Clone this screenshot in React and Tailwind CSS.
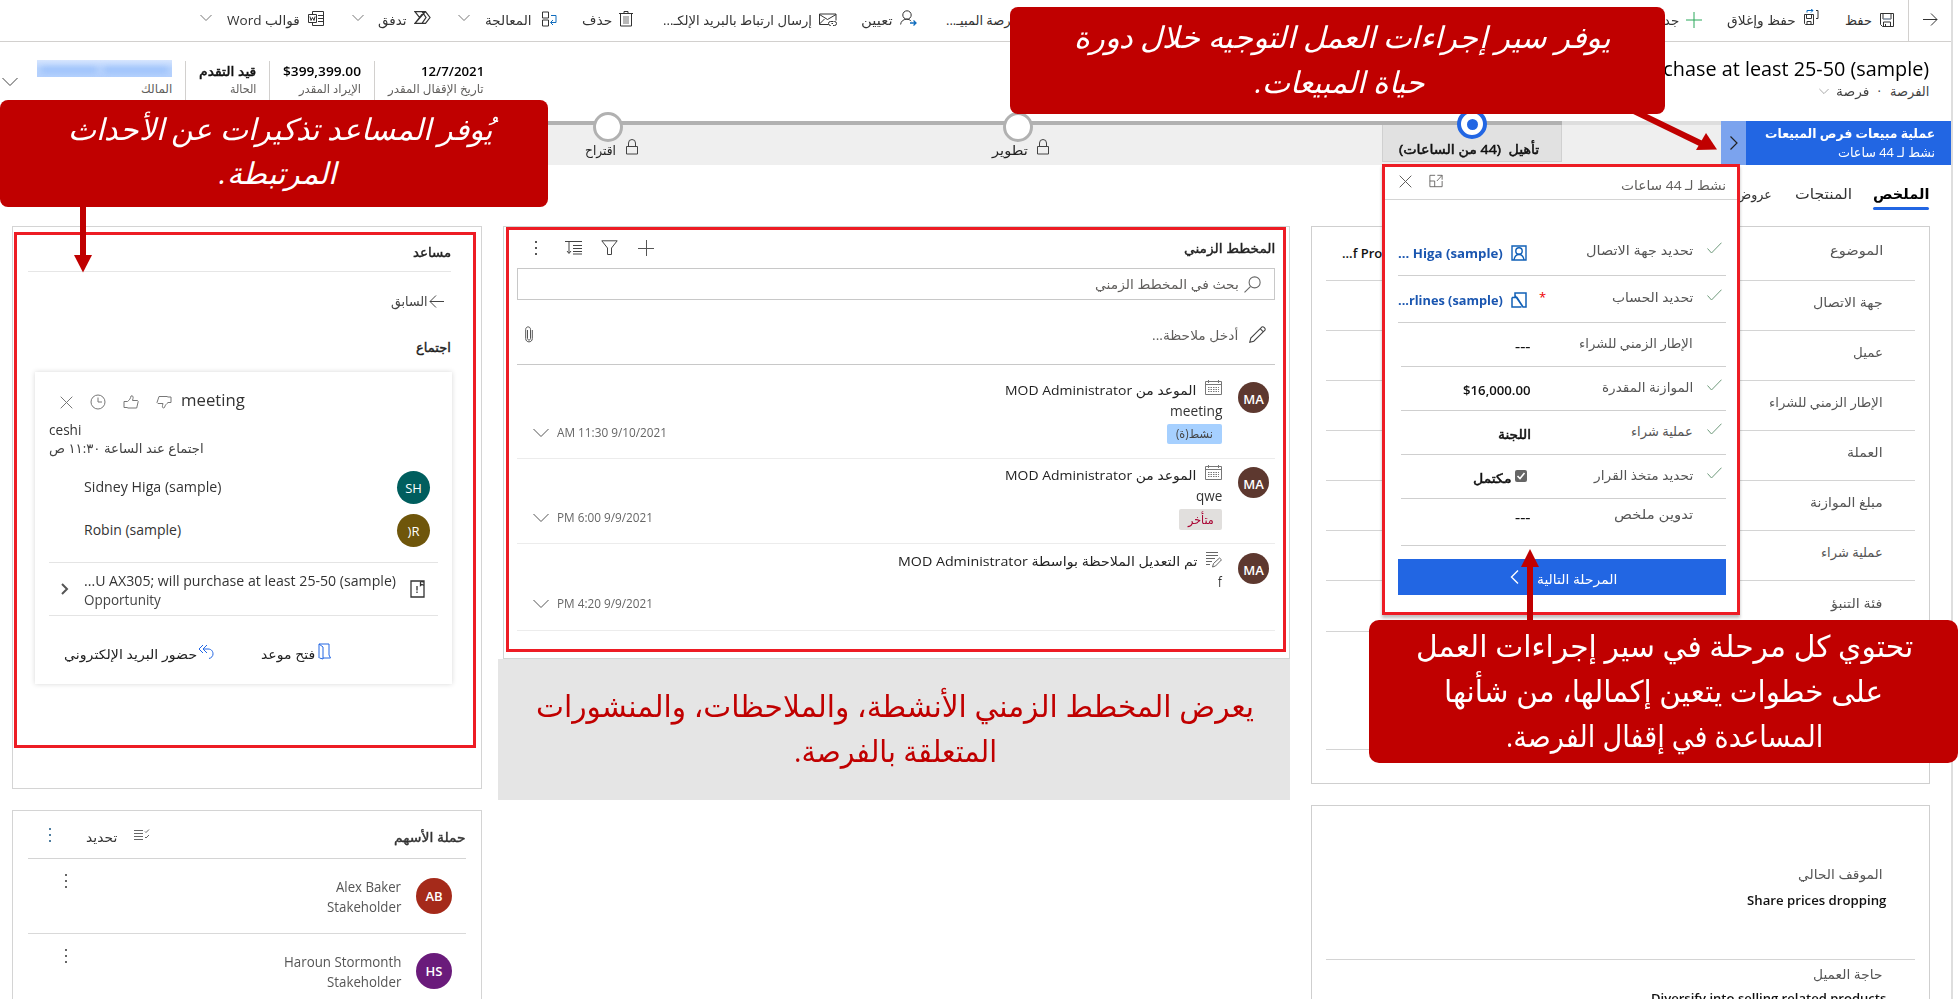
import { useLayoutEffect, useRef, useState } from "react";

/* Text that is condensed or widened to fill the width set by its class. */
function Fit({ className = "", dir = "rtl", children }) {
  const outer = useRef(null);
  const inner = useRef(null);
  const [scale, setScale] = useState(1);
  useLayoutEffect(() => {
    const natural = inner.current.offsetWidth;
    if (natural > 0) setScale(outer.current.clientWidth / natural);
  }, [children]);
  return (
    <span ref={outer} className={"block shrink-0 " + className}>
      <span dir="ltr" className="flex justify-start whitespace-pre">
        <span ref={inner} dir={dir} className="block shrink-0 origin-left" style={{ transform: `scaleX(${scale})` }}>
          {children}
        </span>
      </span>
    </span>
  );
}

function Svg({ className = "", box = "0 0 16 16", sw = 1, children }) {
  return (
    <svg viewBox={box} className={"block shrink-0 " + className} fill="none" stroke="currentColor" strokeWidth={sw}>
      {children}
    </svg>
  );
}

const ChevronDown = ({ className }) => (
  <Svg box="0 0 12 8" className={className}><path d="M.5 1l5.500 5.500L11.500 1" /></Svg>
);
const ChevronBig = ({ className }) => (
  <Svg box="0 0 16 10" className={className}><path d="M.5 1l7.500 7.500L15.500 1" /></Svg>
);
const Close = ({ className }) => (
  <Svg box="0 0 13 13" className={className}><path d="M.7.7l11.600 11.600M12.300.7L.7 12.300" /></Svg>
);
const Check = () => (
  <Svg box="0 0 15 12" className="h-3 w-[15px] text-[#6f9a7c]"><path d="M.5 6.500l4 4.500L14.500.7" /></Svg>
);
const Lock = ({ className = "" }) => (
  <Svg box="0 0 12 16" className={"h-4 w-3 text-[#444] " + className}>
    <path d="M.5 7.500h11v7.500H.5zM2.500 7.500V4a3.500 3.500 0 017 0v3.500" />
  </Svg>
);
const Dots = ({ className = "" }) => (
  <Svg box="0 0 4 16" className={"h-4 w-1 " + className}>
    <path d="M1 1h2v2H1zM1 7h2v2H1zM1 13h2v2H1z" fill="currentColor" stroke="none" />
  </Svg>
);
const Calendar = () => (
  <Svg box="0 0 17 15" className="h-[15px] w-[17px] text-[#777]">
    <path d="M.5 1.500h16v13H.5zM.5 4.500h16M3.500 0v3M13.500 0v3" />
    <path d="M3 7.500h11M3 9.500h11M3 11.500h11" strokeDasharray="1.500 1" />
  </Svg>
);
const NoteIcon = () => (
  <Svg box="0 0 17 17" className="h-[17px] w-[17px] text-[#666]">
    <path d="M1 1.500h12M1 4.500h12M1 7.500h9M1 10.500h6M1 13.500h4" />
    <path d="M7.500 16l1-3.500L14.500 7l2 1.800L10.500 15z" />
  </Svg>
);

const SaveIcon = () => (
  <Svg box="0 0 14 14" className="ms-[14px] h-[14px] w-[14px] text-[#333]">
    <path d="M.5.5h13v13h-11l-2-2zM3 .5v5.500h8V.5M3.500 13.500V9h7v4.500M5.500 11v2.500" />
    <path d="M3.500 6h7" strokeWidth="2" stroke="#9aa6b4" />
  </Svg>
);
const SaveCloseIcon = () => (
  <Svg box="0 0 16 17" className="-mt-1 ms-[26px] h-[17px] w-4 text-[#333]">
    <path d="M1.500 5.500h9v10h-8l-1-1zM3.500 6v3.500h5V6M4 15.500v-3h4v3M13 1.500h2v8h-2" />
    <path d="M4 3.500V1.500h6M8 0l2 1.500L8 3.500" stroke="#0f6cbd" />
  </Svg>
);
const AssignIcon = () => (
  <Svg box="0 0 17 16" className="-mt-1 ms-[29px] h-4 w-[17px] text-[#333]">
    <circle cx="7" cy="5" r="4.200" /><path d="M.6 14.500c.3-3 2.500-5.200 6-5.300 2 0 3.500.6 4.500 2" />
    <path d="M10 13h6M13.500 10.500L16 13l-2.500 2.500" stroke="#0f6cbd" strokeWidth="1.300" />
  </Svg>
);
const MailLinkIcon = () => (
  <Svg box="0 0 18 14" className="ms-[24px] h-[14px] w-[18px] text-[#333]">
    <path d="M9.500 11.500H.5V1h16.500v6.500M.5 1.500l8 5 8.500-5M.5 11l5-5" />
    <path d="M12 12.500h-.5a2 2 0 010-4H14M14 10.500h-1.500M14.500 8.500h1a2 2 0 010 4H14" />
  </Svg>
);
const TrashIcon = () => (
  <Svg box="0 0 14 16" className="-mt-[2px] ms-[30px] h-4 w-[14px] text-[#333]">
    <path d="M0 2.500h14M5 2V.5h4V2M1.500 2.500v12.500h11V2.500" />
    <path d="M5 5v8M7 5v8M9 5v8" stroke="#888" strokeWidth="1.200" />
  </Svg>
);
const ProcessIcon = () => (
  <Svg box="0 0 15 16" className="-mt-[2px] ms-[25px] h-4 w-[15px] text-[#333]">
    <path d="M.5 1h6v6h-6zM.5 9h6v6h-6z" />
    <path d="M9 4.500h5v7H9M11 9l-2.500 2.500L11 14" stroke="#0f6cbd" />
  </Svg>
);
const FlowIcon = () => (
  <Svg box="0 0 17 13" className="-mt-1 ms-[27px] h-[13px] w-[17px] text-[#333]" sw={1.200}>
    <path d="M1 .7h10.500L16 6.500l-4.500 5.800H1l4.500-5.800zM8 .7l4 5.800-4 5.800M5.500 6.500L10 .7M1 12.300L11 1" />
  </Svg>
);
const WordIcon = () => (
  <Svg box="0 0 16 15" className="-mt-[2px] ms-[28px] h-[15px] w-4 text-[#333]">
    <path d="M4.500 3V.5h11v14h-11V12M.5 3.500h8v8h-8zM2 5.500l1 4 1.500-3 1.500 3 1-4M10 4.500h5M10 7.500h5M10 10.500h5" />
  </Svg>
);

function CommandBar() {
  return (
    <div dir="rtl" className="flex h-[42px] w-[1951px] items-center border-b border-[#d2d0ce] pb-[2px] text-[13px] leading-5 text-[#333]">
      <Svg box="0 0 15 13" className="ms-[13px] h-[13px] w-[15px]"><path d="M0 6.500h14M8 .5l6 6-6 6" /></Svg>
      <span className="-mb-[2px] ms-[14px] w-px self-stretch bg-[#d2d0ce]" />
      <SaveIcon />
      <Fit className="ms-2 w-[27px]">حفظ</Fit>
      <SaveCloseIcon />
      <Fit className="ms-[7px] w-[69px]">حفظ وإغلاق</Fit>
      <Svg box="0 0 16 16" className="ms-[25px] h-4 w-4 text-[#2aa85a]"><path d="M0 8h16M8 0v16" /></Svg>
      <Fit className="ms-[7px] w-[26px]">جديد</Fit>
      <Fit className="ms-[635px] w-[72px]">فرصة المبيـ...</Fit>
      <AssignIcon />
      <Fit className="ms-[7px] w-8">تعيين</Fit>
      <MailLinkIcon />
      <Fit className="ms-[7px] w-[149px]">إرسال ارتباط بالبريد الإلكـ...</Fit>
      <TrashIcon />
      <Fit className="ms-[7px] w-[30px]">حذف</Fit>
      <ProcessIcon />
      <Fit className="ms-[10px] w-[47px]">المعالجة</Fit>
      <ChevronDown className="-mt-1 ms-[15px] h-2 w-3 text-[#777]" />
      <FlowIcon />
      <Fit className="ms-[7px] w-[29px]">تدفق</Fit>
      <ChevronDown className="-mt-1 ms-[14px] h-2 w-3 text-[#777]" />
      <WordIcon />
      <Fit className="ms-2 w-[73px]">قوالب Word</Fit>
      <ChevronDown className="-mt-1 ms-[15px] h-2 w-3 text-[#777]" />
    </div>
  );
}

function RecordHeader() {
  return (
    <div dir="rtl" className="flex h-[79px] w-[1951px] justify-between">
      <div className="ms-[22px] mt-[14px]">
        <Fit dir="ltr" className="w-[298px] text-[20px] leading-[26px] font-medium text-black">purchase at least 25-50 (sample)</Fit>
        <div className="-mt-[1px] flex items-center text-[13px] leading-5 text-[#444]">
          <Fit className="w-[39px]">الفرصة</Fit>
          <span className="ms-[9px]">·</span>
          <Fit className="ms-[9px] w-[33px]">فرصة</Fit>
          <ChevronDown className="ms-[7px] h-[7px] w-[10px] text-[#999]" />
        </div>
      </div>
      <div className="flex pt-[19px] text-[12px] leading-[17px] text-[#605e5c]">
        <div className="flex w-[109px] flex-col">
          <Fit dir="ltr" className="w-[63px] text-[13px] font-semibold leading-5 text-black">12/7/2021</Fit>
          <Fit className="-mt-[1px] w-[96px]">تاريخ الإقفال المقدر</Fit>
        </div>
        <div className="flex h-[40px] w-[105px] flex-col border-r border-[#d2d0ce] pr-[13px]">
          <Fit dir="ltr" className="w-[78px] text-[13px] font-semibold leading-5 text-black">$399,399.00</Fit>
          <Fit className="-mt-[1px] w-[62px]">الإيراد المقدر</Fit>
        </div>
        <div className="flex h-[40px] w-[84px] flex-col border-r border-[#d2d0ce] pr-[13px]">
          <Fit className="w-[57px] text-[13px] leading-5 text-[#111] [-webkit-text-stroke:0.5px]">قيد التقدم</Fit>
          <Fit className="-mt-[1px] w-[26px]">الحالة</Fit>
        </div>
        <div className="flex h-[40px] w-[165px] flex-col border-r border-[#d2d0ce] pr-[13px]">
          <span className="relative -mt-[1px] mb-[3px] h-[17px] w-[135px] overflow-hidden bg-linear-to-t from-[#b5d1fd] via-[#b9d4fd] to-[#d6e5fe]">
            <span className="absolute top-2 left-1 h-1 w-14 bg-[#8db8fa] blur-[3px]" />
            <span className="absolute top-2 right-1 h-1 w-16 bg-[#8db8fa] blur-[3px]" />
          </span>
          <Fit className="w-[31px]">المالك</Fit>
        </div>
        <div className="flex w-[21px] justify-end pt-4 pl-[2px]">
          <ChevronBig className="h-[10px] w-4 text-[#444]" />
        </div>
      </div>
    </div>
  );
}

function ProcessBar() {
  return (
    <div className="relative flex h-[44px] w-[1951px] text-[13px] leading-5 text-[#222]">
      <div className="flex h-full w-[1382px] items-center border-t-4 border-[#b1b1b1] bg-[#efefef] pt-[9px] pl-[585px]">
        <Fit className="w-[31px]">اقتراح</Fit>
        <Lock className="-mt-[5px] ml-[10px]" />
        <Fit className="ml-[354px] w-9">تطوير</Fit>
        <Lock className="-mt-[5px] ml-[9px]" />
      </div>
      <div className="h-full w-[180px] border-t-4 border-[#b1b1b1] bg-[#efefef]">
        <div className="flex h-[37px] items-end border border-t-0 border-[#d0d0d0] bg-[#e1e1e1] pb-[2px] pl-4">
          <Fit className="w-[140px] text-[#111] [-webkit-text-stroke:0.5px]">تأهيل  (44 من الساعات)</Fit>
        </div>
      </div>
      <div className="h-full w-[159px] border-t-4 border-[#dedede] bg-[#efefef]" />
      <div className="flex h-full w-[25px] items-center justify-center bg-[#7ba3ee] text-[#222]">
        <Svg box="0 0 8 14" className="h-[14px] w-2" sw={1.200}><path d="M.5.5l6.500 6.500-6.500 6.500" /></Svg>
      </div>
      <div dir="rtl" className="h-full w-[205px] bg-[#2266e3] pt-[3px] pr-4 text-white">
        <Fit className="w-[170px] leading-[19px] font-bold">عملية مبيعات فرص المبيعات</Fit>
        <Fit className="w-[97px] leading-[19px]">نشط لـ 44 ساعات</Fit>
      </div>
      <span className="absolute -top-[9px] left-[593px] size-[30px] rounded-full border-[3px] border-[#b1b1b1] bg-white" />
      <span className="absolute -top-[9px] left-[1003px] size-[30px] rounded-full border-[3px] border-[#b1b1b1] bg-white" />
      <span className="absolute -top-[12px] left-[1457px] flex size-[30px] items-center justify-center rounded-full border-4 border-[#2266e3] bg-white">
        <span className="size-[11px] rounded-full bg-[#2266e3]" />
      </span>
    </div>
  );
}

function Tabs() {
  return (
    <div dir="rtl" className="flex h-[61px] w-[1951px] pt-[19px] pr-[22px] text-[14px] leading-5 text-[#333]">
      <div>
        <Fit className="w-[56px] font-bold text-black">الملخص</Fit>
        <div className="mt-[3px] h-[3px] w-[56px] rounded-full bg-[#2266e3]" />
      </div>
      <Fit className="ms-[21px] w-[57px]">المنتجات</Fit>
      <Fit className="ms-[23px] w-[36px]">عروض</Fit>
    </div>
  );
}

function AssistantCard() {
  return (
    <div className="h-[563px] w-[470px] border border-[#d4d4d4] bg-white text-[13px] leading-5 text-[#444]">
      <div dir="rtl" className="mr-[30px] ml-[15px] h-[45px] border-b border-[#e6e6e6] pt-[15px]">
        <Fit className="w-[38px] text-[#222] [-webkit-text-stroke:0.4px]">مساعد</Fit>
      </div>
      <div dir="rtl" className="mt-[19px] mr-[37px] flex items-center">
        <Svg box="0 0 15 13" className="h-[13px] w-[15px]"><path d="M1 6.500h14M7 .5l-6 6 6 6" /></Svg>
        <Fit className="ms-[1px] w-[37px]">السابق</Fit>
      </div>
      <div dir="rtl" className="mt-[26px] mr-[30px]">
        <Fit className="w-[35px] text-[#222] [-webkit-text-stroke:0.4px]">اجتماع</Fit>
      </div>
      <div className="mt-[15px] ml-[22px] h-[312px] w-[417px] bg-white pt-5 shadow-[0_0_5px_rgba(0,0,0,0.16)]">
        <div className="flex h-5 items-center pl-[25px] text-[#777]">
          <Close className="h-[13px] w-[13px]" />
          <Svg className="ml-[17px] size-4"><circle cx="8" cy="8" r="7" /><path d="M8 3.500V8h4" /></Svg>
          <Svg className="ml-[17px] size-4">
            <path d="M1 7.500h3.500C6.500 6 7.500 4.500 8 2c1.500-.8 2.500.5 2 2.500L9.500 6.500h5l.7 1-1.500 6.500H5l-1-.5H1z" />
          </Svg>
          <Svg className="ml-[17px] size-4">
            <path d="M15 3v5.500h-3C10.500 10 9 11 8.500 13.500 7 14.500 6 13.500 6.500 11.500L7 9.500H2l-1-1L3 2.500h8l1 .5z" />
          </Svg>
          <Fit dir="ltr" className="-mt-1 ml-[9px] w-16 text-[17px] text-[#333]">meeting</Fit>
        </div>
        <div className="mt-[8px] pl-[14px] leading-[19px]">
          <Fit dir="ltr" className="w-8 text-[14px] text-[#333]">ceshi</Fit>
          <Fit className="w-[155px]">اجتماع عند الساعة ١١:٣٠ ص</Fit>
        </div>
        <div className="mt-[13px] flex h-[33px] items-center justify-between pr-[22px] pl-[49px]">
          <Fit dir="ltr" className="-mt-[1px] w-[137px] text-[14px] text-[#333]">Sidney Higa (sample)</Fit>
          <span className="flex size-[33px] items-center justify-center rounded-full bg-[#005e5e] text-white">SH</span>
        </div>
        <div className="mt-[10px] flex h-[33px] items-center justify-between pr-[22px] pl-[49px]">
          <Fit dir="ltr" className="-mt-[1px] w-[97px] text-[14px] text-[#333]">Robin (sample)</Fit>
          <span className="flex size-[33px] items-center justify-center rounded-full bg-[#6f560b] text-white">)R</span>
        </div>
        <div className="mx-[14px] mt-[15px] flex h-[54px] items-center border-y border-[#e4e4e4] pl-3">
          <Svg box="0 0 8 12" className="h-3 w-2 text-[#555]" sw={2}><path d="M1 1l5 5-5 5" /></Svg>
          <div className="mt-[2px] ml-[15px] w-[312px] text-[14px] leading-[19px]">
            <Fit dir="ltr" className="w-[312px] text-[#333]">...U AX305; will purchase at least 25-50 (sample)</Fit>
            <Fit dir="ltr" className="w-[77px]">Opportunity</Fit>
          </div>
          <Svg box="0 0 15 18" className="ml-[14px] h-[18px] w-[15px] text-[#333]" sw={1.300}>
            <path d="M1 1h9l4 1v15H1zM10.500 1v4.500l1.500-1 2 1V1z" /><path d="M7 6v4.500M7 11.500V13" />
          </Svg>
        </div>
        <div className="mt-[28px] flex items-center pl-[29px] text-[#222]">
          <Fit className="w-[133px]">حضور البريد الإلكتروني</Fit>
          <Svg className="-mt-[5px] ml-[1px] size-4 text-[#2266e3]"><path d="M5 1L1 5l4 4M9 1L5 5l4 4M5 5h5c4 0 5 3 5 5s-1.500 4-4 4.500" /></Svg>
          <Fit className="ml-[47px] w-[54px]">فتح موعد</Fit>
          <Svg box="0 0 13 17" className="-mt-[5px] ml-[3px] h-[17px] w-[13px] text-[#2266e3]">
            <path d="M1 15V1h10v11l1.500 3H5M1 1l4 3v12l-3.500-1" />
          </Svg>
        </div>
      </div>
    </div>
  );
}

function Stakeholder({ initials, name, color, nameWidth }) {
  return (
    <div dir="rtl" className="mr-[15px] ml-[15px] flex h-[75px] items-start border-b border-[#d9d9d9] text-[14px] text-[#555]">
      <span className={"ms-[14px] mt-[19px] flex size-9 items-center justify-center rounded-full text-white " + color}>
        <span className="text-[13px] font-semibold">{initials}</span>
      </span>
      <div className="ms-[15px] mt-[18px]">
        <Fit dir="ltr" className={nameWidth}>{name}</Fit>
        <Fit dir="ltr" className="w-[74px]">Stakeholder</Fit>
      </div>
      <Dots className="ms-auto mt-[14px] ml-[36px] text-[#666]" />
    </div>
  );
}

function StakeholdersCard() {
  return (
    <div className="mt-[21px] h-[200px] w-[470px] border border-[#d4d4d4] bg-white text-[13px] leading-5 text-[#333]">
      <div dir="rtl" className="mx-[15px] flex h-[48px] items-center border-b border-[#d4d4d4] pt-1">
        <Fit className="w-[72px] [-webkit-text-stroke:0.4px]">حملة الأسهم</Fit>
        <Svg box="0 0 16 12" className="-mt-1 ms-[244px] h-3 w-4 text-[#666]">
          <path d="M0 1.500h9M0 4.500h9M0 7.500h9M0 10.500h9M11 2.500l1 1 3-3M11 8l1 1 3-3" />
        </Svg>
        <Fit className="ms-[17px] w-[31px]">تحديد</Fit>
        <Dots className="-mt-1 ms-[34px] text-[#4f7ea0]" />
      </div>
      <Stakeholder initials="AB" name="Alex Baker" color="bg-[#a52a1a]" nameWidth="w-[65px]" />
      <Stakeholder initials="HS" name="Haroun Stormonth" color="bg-[#6a1b7b]" nameWidth="w-[117px]" />
    </div>
  );
}

function TimelineItem({ className, icon, title, titleWidth, sub, subWidth, tag, date, dateWidth }) {
  return (
    <div dir="rtl" className={"flex items-start border-b border-[#ececec] " + className}>
      <span className="ms-[6px] flex size-[31px] items-center justify-center rounded-full bg-[#5d382f] pt-[2px] text-[13px] font-semibold text-white">MA</span>
      <div className="ms-[16px] -mt-[2px]">
        <div className="flex h-[19px]">
          {icon}
          <Fit className={"ms-2 font-medium text-[#222] " + titleWidth}>{title}</Fit>
        </div>
        <Fit dir="ltr" className={"mt-[2px] text-[14px] text-[#333] " + subWidth}>{sub}</Fit>
        {tag}
      </div>
      <div dir="ltr" className="mt-[41px] mr-auto flex w-[160px] items-center pl-4">
        <ChevronBig className="h-[10px] w-4 text-[#555]" />
        <Fit dir="ltr" className={"ml-2 text-[12px] text-[#666] " + dateWidth}>{date}</Fit>
      </div>
    </div>
  );
}

function TimelineCard() {
  return (
    <div className="relative ml-[5px] h-[433px] w-[787px] border border-[#d0d6d4] bg-white pr-[13px] pl-[13px] text-[13px] leading-5 text-[#444]">
      <div className="flex h-[41px] items-center">
        <Dots className="ml-[17px] text-[#555]" />
        <Svg box="0 0 17 15" className="ml-[27px] h-[15px] w-[17px] text-[#444]">
          <path d="M0 1.500h17M4 2v11M2 11l2 2.500L6 11M8 5.500h9M8 8.500h9M8 11.500h9M8 14h9" />
        </Svg>
        <Svg box="0 0 17 15" className="ml-[19px] h-[15px] w-[17px] text-[#444]"><path d="M.8.8h15.400L10.500 8v6.500h-4V8z" /></Svg>
        <Svg className="ml-[20px] size-4 text-[#555]"><path d="M0 8.500h16M8.500 0v16" /></Svg>
        <Fit className="ml-[530px] w-[91px] text-[#222] [-webkit-text-stroke:0.4px]">المخطط الزمني</Fit>
      </div>
      <div dir="rtl" className="flex h-8 w-[758px] items-center border border-[#c8c8c8] text-[#605e5c]">
        <Svg className="ms-[13px] size-[17px] text-[#666]"><circle cx="10" cy="6" r="5.200" /><path d="M6 10l-5.500 5.500" /></Svg>
        <Fit className="ms-[5px] w-[144px]">بحث في المخطط الزمني</Fit>
      </div>
      <div dir="rtl" className="flex h-[65px] w-[758px] items-center border-b border-[#c8c8c8] pt-[5px] text-[#605e5c]">
        <Svg className="ms-[9px] size-[17px] text-[#444]"><path d="M.7 15.300l1-4L12 1c1.500-1 4 1.500 3 3L4.500 14.300zM10.500 2.500l3 3" /></Svg>
        <Fit className="ms-[11px] w-[86px]">أدخل ملاحظة...</Fit>
        <Svg box="0 0 8 17" className="ms-auto ml-2 h-[17px] w-2 text-[#555]">
          <path d="M2.500 4v8.500c0 2 3 2 3 0V3.500C5.500 0 .7 0 .7 3.500v9C.7 17 7.300 17 7.300 12.500V4" />
        </Svg>
      </div>
      <div className="w-[758px]">
        <TimelineItem
          className="h-[94px] pt-[17px]" icon={<Calendar />} title="الموعد من MOD Administrator" titleWidth="w-[192px]"
          sub="meeting" subWidth="w-[52px]" date="AM 11:30 9/10/2021" dateWidth="w-[110px]"
          tag={<span className="mt-[3px] flex h-[20px] w-[55px] items-center justify-center rounded-[2px] bg-[#a6d0ff] text-[12px]"><Fit className="w-[37px]">نشط(ة)</Fit></span>}
        />
        <TimelineItem
          className="h-[85px] pt-[8px]" icon={<Calendar />} title="الموعد من MOD Administrator" titleWidth="w-[192px]"
          sub="qwe" subWidth="w-[26px]" date="PM 6:00 9/9/2021" dateWidth="w-24"
          tag={<span className="mt-[3px] flex h-[21px] w-[43px] items-center justify-center rounded-[2px] bg-[#e1dfdd] text-[12px] text-[#a80030]"><Fit className="w-[26px]">متأخر</Fit></span>}
        />
        <TimelineItem
          className="h-[87px] pt-[9px]" icon={<NoteIcon />} title="تم التعديل الملاحظة بواسطة MOD Administrator" titleWidth="w-[299px]"
          sub="f" subWidth="w-[4px]" date="PM 4:20 9/9/2021" dateWidth="w-24"
        />
      </div>
      <div className="pointer-events-none absolute top-0 left-[2px] h-[425px] w-[780px] border-[3px] border-[#ed1c24]" />
    </div>
  );
}

const detailRows = [
  ["الموضوع", "w-[53px]", "h-[54px]"],
  ["جهة الاتصال", "w-[70px]", "h-[50px]"],
  ["عميل", "w-[30px]", "h-[50px]"],
  ["الإطار الزمني للشراء", "w-[114px]", "h-[50px]"],
  ["العملة", "w-[36px]", "h-[50px]"],
  ["مبلغ الموازنة", "w-[73px]", "h-[50px]"],
  ["عملية شراء", "w-[62px]", "h-[50px]"],
  ["فئة التنبؤ", "w-[52px]", "h-[51px]"],
];

function DetailsColumn() {
  return (
    <div className="ml-[21px] w-[619px] text-[13px] leading-5 text-[#555]">
      <div className="h-[558px] border border-[#cfcfcf] bg-white px-[14px]">
        {detailRows.map(([label, width, height], i) => (
          <div key={label} dir="rtl" className={"flex items-center justify-between border-b border-[#d4d4d4] pr-8 pb-[7px] " + height}>
            <Fit className={width}>{label}</Fit>
            {i === 0 && <Fit dir="ltr" className="mt-[6px] ml-4 w-[40px] font-semibold text-[#111]">...f Pro</Fit>}
          </div>
        ))}
        <div className="h-[118px] border-b border-[#d4d4d4]" />
      </div>
      <div dir="rtl" className="mt-[21px] h-[220px] border border-[#cfcfcf] bg-white px-[14px]">
        <div className="h-[154px] border-b border-[#d4d4d4] pt-[58px] pr-8">
          <Fit className="w-[85px]">الموقف الحالي</Fit>
          <Fit dir="ltr" className="-mr-[3px] mt-[6px] w-[139px] font-semibold text-[#111]">Share prices dropping</Fit>
        </div>
        <div className="pt-[4px] pr-8">
          <Fit className="w-[70px]">حاجة العميل</Fit>
          <Fit dir="ltr" className="-mr-[3px] mt-[4px] w-[235px] font-semibold text-[#111]">Diversify into selling related products</Fit>
        </div>
      </div>
    </div>
  );
}

const ContactIcon = () => (
  <Svg className="ms-1 size-4 text-[#1160b7]" sw={1.400}>
    <path d="M1 1h14v14H1z" /><circle cx="8" cy="6" r="3.200" /><path d="M3 15c.5-3.500 2-5.500 5-5.500s4.500 2 5 5.500" />
  </Svg>
);
const AccountIcon = () => (
  <Svg className="ms-1 size-4 text-[#1160b7]" sw={1.500}>
    <path d="M1 5.500V15h9.500M4 3.500V1h11v14h-3zM1 5.500h5l6 9.500M4 1v4.500" />
  </Svg>
);

function Step({ className, line = "w-[325px]", done, label, labelWidth, required, children }) {
  return (
    <div className={"flex items-center border-[#cfcfcf] " + className}>
      <div className={"flex h-full items-center border-b border-inherit " + line}>
        <span className="ms-1 w-[15px] shrink-0 pb-2">{done && <Check />}</span>
        <div className="ms-[14px] flex w-[162px] shrink-0 pb-[4px] text-[#555]">
          <Fit className={labelWidth}>{label}</Fit>
          {required && <span className="ms-auto ml-[8px] text-[#e00]">*</span>}
        </div>
        <div className="flex items-center pt-[2px] font-semibold text-[#111]">{children}</div>
      </div>
    </div>
  );
}

function StageFlyout() {
  return (
    <div dir="rtl" className="absolute top-[164px] left-[1382px] h-[451px] w-[358px] border-[3px] border-[#ed1c24] bg-white text-[13px] leading-5 shadow-[0_3px_3px_rgba(0,0,0,0.25)]">
      <div className="flex h-[33px] items-center border-b border-[#d4d4d4] pr-[11px] pl-[14px] text-[#605e5c]">
        <Fit className="mt-1 w-[105px]">نشط لـ 44 ساعات</Fit>
        <Svg className="-mt-1 ms-auto h-[14px] w-4">
          <path d="M7 1.500H1v13h14V8M9.500 1.500h5.500v5M15 1.500L9 8M1 8h5.500v6.500" />
        </Svg>
        <Close className="-mt-1 ms-[16px] h-[13px] w-[13px]" />
      </div>
      <div className="pr-[11px]">
        <Step className="h-[76px]" line="w-[328px] pt-[28px]" done label="تحديد جهة الاتصال" labelWidth="w-[107px]">
          <ContactIcon />
          <Fit dir="ltr" className="ms-2 w-[105px] font-bold text-[#1a56b0]">... Higa (sample)</Fit>
        </Step>
        <Step className="h-[47px]" line="w-[328px]" done required label="تحديد الحساب" labelWidth="w-[81px]">
          <AccountIcon />
          <Fit dir="ltr" className="ms-2 w-[105px] font-bold text-[#1a56b0]">...rlines (sample)</Fit>
        </Step>
        <Step className="h-[44px]" label="الإطار الزمني للشراء" labelWidth="w-[114px]">
          <Fit dir="ltr" className="w-4">---</Fit>
        </Step>
        <Step className="h-[44px]" done label="الموازنة المقدرة" labelWidth="w-[91px]">
          <Fit dir="ltr" className="w-[68px]">$16,000.00</Fit>
        </Step>
        <Step className="h-[44px]" done label="عملية شراء" labelWidth="w-[62px]">
          <Fit className="w-[33px] font-normal [-webkit-text-stroke:0.5px]">اللجنة</Fit>
        </Step>
        <Step className="h-[44px]" done label="تحديد متخذ القرار" labelWidth="w-[99px]">
          <span className="-mt-1 ms-[4px] flex size-[12px] items-center justify-center rounded-[2px] bg-[#666] text-white">
            <Svg box="0 0 10 10" className="size-[10px]" sw={1.600}><path d="M1.500 5l2.500 2.500L8.500 2" /></Svg>
          </span>
          <Fit className="ms-1 w-[38px] font-normal [-webkit-text-stroke:0.5px]">مكتمل</Fit>
        </Step>
        <Step className="h-[47px]" line="w-[325px] pb-3" label="تدوين ملخص" labelWidth="w-[79px]">
          <Fit dir="ltr" className="w-4">---</Fit>
        </Step>
        <div className="mt-[13px] flex h-[36px] w-[328px] items-center bg-[#2266e3] pr-[109px] text-white">
          <Fit className="mt-1 w-[80px]">المرحلة التالية</Fit>
          <Svg box="0 0 9 14" className="ms-[18px] h-[14px] w-[9px]" sw={1.400}><path d="M8 .5L1.500 7 8 13.500" /></Svg>
        </div>
      </div>
    </div>
  );
}

function Callouts() {
  return (
    <>
      <Svg box="0 0 90 44" className="absolute top-[110px] left-[1632px] h-11 w-[90px] text-[#c00000]">
        <path d="M2 1L70 34" strokeWidth="6" /><path d="M74 23L85 39.500L64 40z" fill="currentColor" stroke="none" />
      </Svg>
      <Svg box="0 0 18 70" className="absolute top-[203px] left-[74px] h-[70px] w-[18px] text-[#c00000]">
        <path d="M9 0V56" strokeWidth="6" /><path d="M0 52h18L9 69.500z" fill="currentColor" stroke="none" />
      </Svg>
      <Svg box="0 0 18 75" className="absolute top-[549px] left-[1521px] h-[75px] w-[18px] text-[#c00000]">
        <path d="M9 14V75" strokeWidth="6" /><path d="M0 18h18L9 0z" fill="currentColor" stroke="none" />
      </Svg>
      <div className="absolute top-[7px] left-[1010px] h-[107px] w-[655px] rounded-[8px] bg-[#c00000] pt-[7px] text-[30px] leading-[45px] text-white italic">
        <Fit className="ml-[64px] w-[536px]">يوفر سير إجراءات العمل التوجيه خلال دورة</Fit>
        <Fit className="ml-[245px] w-[170px]">حياة المبيعات.</Fit>
      </div>
      <div className="absolute top-[100px] left-0 h-[107px] w-[548px] rounded-[8px] bg-[#c00000] pt-[7px] text-[30px] leading-[44px] text-white italic">
        <Fit className="ml-[68px] w-[424px]">يُوفر المساعد تذكيرات عن الأحداث</Fit>
        <Fit className="ml-[219px] w-[117px]">المرتبطة.</Fit>
      </div>
      <div className="absolute top-[620px] left-[1369px] h-[143px] w-[589px] rounded-[10px] bg-[#c00000] pt-[3px] text-[30px] leading-[45px] text-white">
        <Fit className="ml-[47px] w-[497px]">تحتوي كل مرحلة في سير إجراءات العمل</Fit>
        <Fit className="ml-[75px] w-[439px]">على خطوات يتعين إكمالها، من شأنها</Fit>
        <Fit className="ml-[137px] w-[317px]">المساعدة في إقفال الفرصة.</Fit>
      </div>
    </>
  );
}

export default function App() {
  return (
    <div className="relative h-[999px] w-[1958px] overflow-hidden bg-white font-['Open_Sans','DejaVu_Sans',sans-serif]">
      <div className="h-full w-[1953px] border-r-2 border-[#dedede]">
        <CommandBar />
        <RecordHeader />
        <ProcessBar />
        <Tabs />
        <div className="flex items-start">
          <div className="relative ml-3">
            <AssistantCard />
            <StakeholdersCard />
            <div className="pointer-events-none absolute top-[6px] left-[2px] h-[516px] w-[462px] border-[3px] border-[#ed1c24]" />
          </div>
          <div className="ml-4 w-[792px]">
            <TimelineCard />
            <div className="h-[141px] bg-[#e5e5e5] pt-[24px] text-[30px] leading-[45px] text-[#c00000]">
              <Fit className="ml-[38px] w-[718px]">يعرض المخطط الزمني الأنشطة، والملاحظات، والمنشورات</Fit>
              <Fit className="ml-[296px] w-[203px]">المتعلقة بالفرصة.</Fit>
            </div>
          </div>
          <DetailsColumn />
        </div>
      </div>
      <StageFlyout />
      <Callouts />
    </div>
  );
}
